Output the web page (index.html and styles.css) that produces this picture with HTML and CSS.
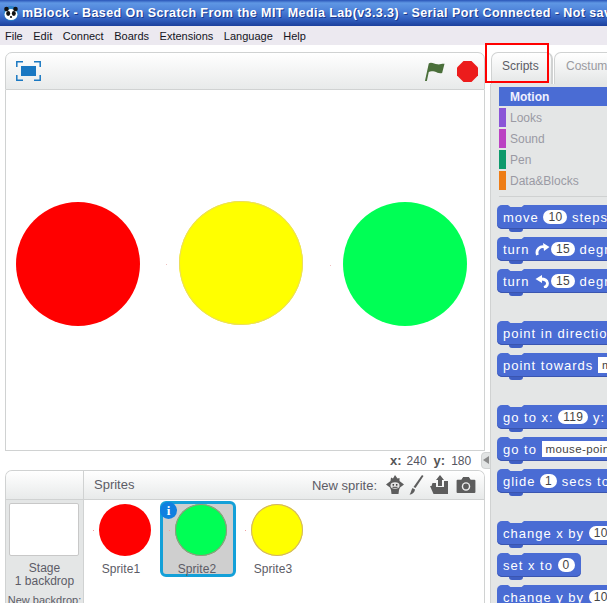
FILE: index.html
```html
<!DOCTYPE html>
<html lang="en">
<head>
<meta charset="utf-8">
<title>mBlock</title>
<link rel="stylesheet" href="styles.css">
</head>
<body>
<div class="titlebar">
  <svg class="panda" width="16" height="17" viewBox="0 0 16 16"><circle cx="8" cy="8" r="7.500" fill="#2a80c8"/><ellipse cx="8" cy="9" rx="6.500" ry="5.500" fill="#fff"/><circle cx="3.500" cy="3.500" r="2.300" fill="#111"/><circle cx="12.500" cy="3.500" r="2.300" fill="#111"/><ellipse cx="5.200" cy="8" rx="2" ry="2.400" fill="#111"/><ellipse cx="10.800" cy="8" rx="2" ry="2.400" fill="#111"/><circle cx="8" cy="11.500" r="1.100" fill="#111"/></svg>
  <span class="title-text">mBlock - Based On Scratch From the MIT Media Lab(v3.3.3) - Serial Port Connected - Not saved</span>
</div>
<nav class="menubar">
  <span>File</span><span>Edit</span><span>Connect</span><span>Boards</span><span>Extensions</span><span>Language</span><span>Help</span>
</nav>
<main class="workspace">
  <section class="left">
    <div class="stage-panel">
      <div class="stage-head">
        <svg class="fullscreen" width="25" height="20" viewBox="0 0 25 20"><g fill="none" stroke="#1a78c2" stroke-width="1.500"><path d="M.8 6V.8H7"/><path d="M18 .8H24.200V6"/><path d="M.8 14V19.200H7"/><path d="M18 19.200H24.200V14"/></g><rect x="5" y="5" width="15" height="10" fill="#1a78c2"/></svg>
        <span class="spacer"></span>
        <svg class="flag" width="21" height="21" viewBox="0 0 22 21"><path d="M1 20.500 5 2C8 0 11 3 14 3 17 3.500 19 2 21.500 2.500L19 12C16 13 14 11.500 11 10.500 8.500 10 6.500 10 5 11L3 20.500Z" fill="#4a6f3a"/></svg>
        <svg class="stop" width="21" height="21" viewBox="0 0 21 21"><path d="M6.500 0H14.500L21 6.500V14.500L14.500 21H6.500L0 14.500V6.500Z" fill="#ec1c1c"/></svg>
      </div>
      <div class="stage">
        <span class="ball ball-red"></span>
        <span class="ball ball-yellow"></span>
        <span class="ball ball-green"></span>
      </div>
    </div>
    <div class="coords"><b>x:</b><span class="cx">240</span><b>y:</b><span class="cy">180</span></div>
    <div class="sprites-panel">
      <div class="stage-col">
        <div class="col-head"></div>
        <div class="stage-thumb"></div>
        <div class="stage-label">Stage<br>1 backdrop</div>
        <div class="new-backdrop">New backdrop:</div>
      </div>
      <div class="sprite-col">
        <div class="sprite-head">
          <span class="sprite-title">Sprites</span>
          <span class="spacer"></span>
          <span class="new-sprite">New sprite:</span>
          <svg class="tool t-lib" width="18" height="20" viewBox="0 0 18 20"><path d="M9 0 11.500 3.500 13.500 3 13.500 6 18 9.500 14 12.500 13 15 12.500 19H5.500L5 15 4 12.500 0 9.500 4.500 6 5 2.500 7 3.500Z" fill="#5d5d5d"/><ellipse cx="9" cy="10.500" rx="4.500" ry="3.200" fill="#e6e6e6"/><circle cx="7.300" cy="9.800" r=".9" fill="#333"/><circle cx="10.700" cy="9.800" r=".9" fill="#333"/><path d="M6.500 12.300H11.500" stroke="#444"/></svg>
          <svg class="tool t-brush" width="15" height="20" viewBox="0 0 15 20"><path d="M13 0 14.500 1 6.500 13 4.500 12Z" fill="#5d5d5d"/><path d="M3.500 13 6 14.500C5.500 18 3 19.500 .5 19.500 2 18 2 15 3.500 13Z" fill="#5d5d5d"/></svg>
          <svg class="tool t-up" width="18" height="20" viewBox="0 0 18 20"><path d="M10 0 14 5H12V11H8V5H6Z" fill="#5d5d5d"/><path d="M0 11H1.500L2.500 8H6V12H14V6H18V19H3.500Z" fill="#5d5d5d"/></svg>
          <svg class="tool t-cam" width="20" height="16" viewBox="0 0 20 17"><path d="M1 3H5L7 0H13L15 3H19Q20 3 20 4V16Q20 17 19 17H1Q0 17 0 16V4Q0 3 1 3Z" fill="#5d5d5d"/><circle cx="10" cy="10" r="4.500" fill="#eee"/><circle cx="10" cy="10" r="3" fill="#5d5d5d"/></svg>
        </div>
        <div class="sprite-grid">
          <div class="sprite"><i class="dot"></i><span class="thumb red"></span><span class="name">Sprite1</span></div>
          <div class="sprite selected"><i class="dot"></i><span class="thumb green"></span><span class="name">Sprite2</span><span class="info">i</span></div>
          <div class="sprite"><i class="dot"></i><span class="thumb yellow"></span><span class="name">Sprite3</span></div>
        </div>
      </div>
    </div>
    <span class="collapse"></span>
  </section>
  <section class="right">
    <div class="tabs">
      <span class="tab active">Scripts</span>
      <span class="tab">Costumes</span>
    </div>
    <span class="highlight"></span>
    <div class="palette">
      <div class="cats">
        <div class="cat cat-on">Motion</div>
        <div class="cat"><i class="sw sw-looks"></i>Looks</div>
        <div class="cat"><i class="sw sw-sound"></i>Sound</div>
        <div class="cat"><i class="sw sw-pen"></i>Pen</div>
        <div class="cat"><i class="sw sw-data"></i>Data&amp;Blocks</div>
      </div>
      <div class="sep"></div>
      <div class="blocks">
        <div class="blk">move <span class="num">10</span> steps</div>
        <div class="blk">turn <svg class="arrow" width="15" height="13" viewBox="0 0 15 13"><path d="M2.500 12C.5 7 5 2.500 10 4" fill="none" stroke="#fff" stroke-width="2.800"/><path d="M8 0 14.500 4 9 8Z" fill="#fff"/></svg> <span class="num">15</span> degrees</div>
        <div class="blk">turn <svg class="arrow" width="15" height="13" viewBox="0 0 15 13"><path d="M9 12.500C14 11 14 4 6 4" fill="none" stroke="#fff" stroke-width="2.800"/><path d="M7 0 .5 4 7 8Z" fill="#fff"/></svg> <span class="num">15</span> degrees</div>
        <div class="blk gap">point in direction <span class="num">90</span></div>
        <div class="blk">point towards <span class="drop">mouse-pointer</span></div>
        <div class="blk gap">go to x: <span class="num">119</span> y: <span class="num">0</span></div>
        <div class="blk">go to <span class="drop">mouse-pointer</span></div>
        <div class="blk">glide <span class="num">1</span> secs to x: <span class="num">0</span></div>
        <div class="blk gap">change x by <span class="num">10</span></div>
        <div class="blk">set x to <span class="num">0</span></div>
        <div class="blk">change y by <span class="num">10</span></div>
      </div>
    </div>
  </section>
</main>
</body>
</html>
```

FILE: styles.css
```css
* { box-sizing: border-box; }
html, body { margin: 0; height: 100%; }
body {
  width: 607px; height: 603px; overflow: hidden; background: #fff;
  font-family: "Liberation Sans", Arial, sans-serif; color: #5c5c66;
  display: flex; flex-direction: column;
}
.titlebar {
  height: 26px; flex: none; display: flex; align-items: center; gap: 3px; padding-left: 3px;
  background: linear-gradient(#2a55b8 0, #5f97e4 3px, #4f84da 10px, #2f5cbc 20px, #1c3f9c 100%);
  overflow: hidden; white-space: nowrap;
}
.panda { flex: none; }
.title-text { color: #fff; font-weight: 700; font-size: 12.500px; letter-spacing: .42px; text-shadow: 1px 1px 0 #1a3a90; }
.menubar {
  height: 19px; flex: none; background: #ece9f0; display: flex; align-items: center;
  padding-left: 5px; gap: 10.500px; font-size: 11px; color: #14141c;
}
.workspace { flex: 1; display: flex; min-height: 0; position: relative; }
.left { width: 490px; flex: none; padding: 7px 0 0 5px; position: relative; }
.right { flex: 1; position: relative; min-width: 0; display: flex; flex-direction: column; }
.spacer { flex: 1; }

.stage-panel { width: 480px; }
.stage-head {
  height: 38px; display: flex; align-items: center; padding: 0 6px 0 10px;
  border: 1px solid #d0d2d2; border-radius: 7px 7px 0 0;
  background: linear-gradient(#fff, #e8eaea);
}
.flag { margin-right: 12px; }
.stage { height: 361px; border: 1px solid #d0d2d2; border-top: 0; background: #fff; display: flex; align-items: center; padding-left: 10px; gap: 39.500px; }
.ball { width: 124px; height: 124px; border-radius: 50%; flex: none; margin-bottom: 12px; position: relative; }
.ball-red { background: #f00; }
.ball-yellow { background: #ff0; box-shadow: 0 0 0 1px #eadc60 inset; margin-left: -1px; margin-bottom: 14px; }
.ball-green { background: #00ff55; margin-left: 1px; }
.ball-yellow::before, .ball-green::before {
  content: ""; position: absolute; left: -13px; top: 63px; width: 1px; height: 1px; background: #f0c0c0;
}

.coords { height: 19px; display: flex; align-items: center; padding-left: 385px; font-size: 12px; color: #55555f; }
.coords b { font-size: 13px; color: #555; }
.cx { margin: 0 7px 0 5px; }
.cy { margin-left: 6px; }

.sprites-panel {
  width: 480px; height: 140px; display: flex; border: 1px solid #d0d2d2; border-bottom: 0;
  border-radius: 7px 7px 0 0; overflow: hidden;
}
.stage-col { width: 78px; flex: none; background: #e4e6e6; border-right: 1px solid #d0d2d2; text-align: center; font-size: 12px; overflow: hidden; }
.col-head { height: 29px; background: linear-gradient(#fff, #e8eaea); border-bottom: 1px solid #d0d2d2; }
.stage-thumb { width: 70px; height: 53px; margin: 3px 0 0 3px; background: #fff; border: 1px solid #c8c8c8; border-radius: 2px; }
.stage-label { margin-top: 6px; line-height: 13px; }
.new-backdrop { margin-top: 6px; font-size: 11px; white-space: nowrap; }
.sprite-col { flex: 1; display: flex; flex-direction: column; min-width: 0; }
.sprite-head {
  height: 29px; flex: none; display: flex; align-items: center; padding: 0 8px 0 10px;
  background: linear-gradient(#fff, #e8eaea); border-bottom: 1px solid #d0d2d2; font-size: 13px;
}
.sprite-title { font-size: 13px; margin-bottom: 2px; }
.new-sprite { margin-right: 9px; }
.t-brush { margin-left: 5px; }
.t-up { margin-left: 6px; }
.t-cam { margin-left: 8px; }
.sprite-grid { display: grid; grid-template-columns: repeat(3, 76px); padding: 1px 0 0 0; }
.sprite {
  height: 76px; position: relative; display: flex; flex-direction: column; align-items: center;
  border: 3px solid transparent; border-radius: 6px; font-size: 12px;
}
.selected { background: #cfcfcf; border-color: #14a0d8; }
.thumb { width: 52px; height: 52px; border-radius: 50%; display: block; margin-left: 6px; flex: none; }
.red { background: #f00; }
.green { background: #00ff55; box-shadow: 0 0 0 1px #a09080 inset; }
.yellow { background: #ff0; box-shadow: 0 0 0 1px #d0b070 inset; }
.name { margin-top: 6px; margin-right: 2px; line-height: 14px; letter-spacing: .1px; }
.dot { position: absolute; left: 6px; top: 26px; width: 1px; height: 1px; background: #f0a0a0; }
.info {
  position: absolute; left: -3px; top: -2px; width: 17px; height: 17px; border-radius: 50%;
  background: #0f7fe0; color: #fff; font: 700 13px/17px "Liberation Serif", serif; text-align: center;
}
.collapse {
  position: absolute; left: 481px; top: 407px; width: 10px; height: 17px; background: #e2e4e4;
  border-radius: 4px 0 0 4px; border: 1px solid #d0d2d2;
}
.collapse::after {
  content: ""; position: absolute; left: 1px; top: 3px; border: 4.500px solid transparent;
  border-right: 6px solid #8a8a8a; border-left: 0;
}

.tabs { height: 39px; flex: none; display: flex; padding: 7px 0 0 1px; gap: 1px; }
.tab {
  width: 62px; flex: none; line-height: 26px; font-size: 12px; color: #9a9aa0;
  border: 1px solid #d0d2d2; border-bottom: 0; border-radius: 7px 7px 0 0;
  background: linear-gradient(#fff, #e4e6e6); white-space: nowrap; padding-left: 11px; text-align: left;
}
.tab.active { color: #5c5c66; border-right-width: 2px; padding-left: 10px; }
.highlight {
  position: absolute; left: -5px; top: -2px; width: 64px; height: 40px; border: 2px solid #f00; pointer-events: none;
}
.palette { flex: 1; background: #e4e6e6; border-left: 1px solid #d0d2d2; padding: 3px 0 0 8px; overflow: hidden; width: 117px; }
.cats { display: flex; flex-direction: column; gap: 2px; font-size: 12px; }
.cat { height: 19px; display: flex; align-items: flex-start; color: #9a9aa4; line-height: 21px; white-space: nowrap; }
.cat-on { background: #4a6cd4; color: #f0f0ff; font-weight: 700; padding-left: 11px; }
.sw { width: 7px; height: 19px; margin-right: 4px; flex: none; }
.sw-looks { background: #8a55d7; }
.sw-sound { background: #bb42c3; }
.sw-pen { background: #0e9a6c; }
.sw-data { background: #ee7d16; }
.sep { height: 1px; background: #cfd1d1; margin: 6px 0 0; }
.blocks { margin: 8px 0 0 -2px; display: flex; flex-direction: column; align-items: flex-start; gap: 8px; }
.blk {
  position: relative; height: 24px; flex: none; background: #4a6cd4; color: #fff; font-size: 13px;
  border-radius: 5px; padding: 0 6px; display: flex; align-items: center; white-space: pre; letter-spacing: 1px;
  box-shadow: inset 0 -1px 0 #3a55b0;
}
.blk::before {
  content: ""; position: absolute; left: 11px; top: 0; width: 16px; height: 2px;
  background: #e4e6e6; clip-path: polygon(0 0, 100% 0, 85% 100%, 15% 100%);
}
.blk::after {
  content: ""; position: absolute; left: 12px; bottom: -3px; width: 14px; height: 3px;
  background: #3f5fc4; border-radius: 0 0 4px 4px;
}
.gap { margin-top: 20px; }
.num {
  background: #fff; color: #444; border-radius: 8px; font-size: 12px; padding: 0 5px; line-height: 14px; letter-spacing: .3px;
}
.drop { background: #fff; color: #444; font-size: 11.500px; padding: 0 4px; line-height: 16px; letter-spacing: .4px; }
.arrow { flex: none; margin: 0 1px; }
```
